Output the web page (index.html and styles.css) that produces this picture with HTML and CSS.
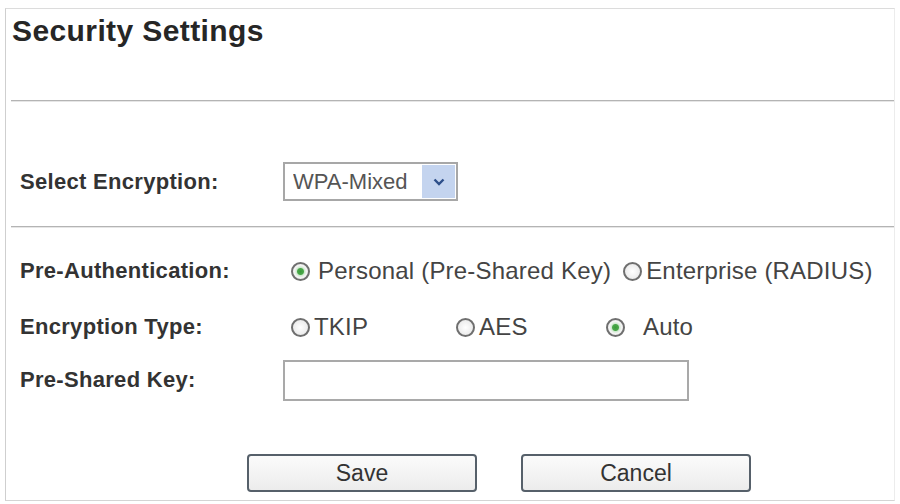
FILE: index.html
```html
<!DOCTYPE html>
<html lang="en">
<head>
<meta charset="UTF-8"/>
<title>Security Settings</title>
<link rel="stylesheet" href="styles.css">
</head>
<body>

<div class="panel">
  <h1 class="title">Security Settings</h1>
  <div class="rule"></div>

  <div class="row row-select">
    <span class="label">Select Encryption:</span>
    <div class="select-wrap">
      <select class="select">
        <option>WPA-Mixed</option>
        <option>WPA</option>
        <option>WPA2</option>
        <option>WEP</option>
        <option>None</option>
      </select>
      <span class="select-arrow">
        <svg width="12" height="8" viewBox="0 0 12 8"><path d="M1.5 1.5 L6 6 L10.5 1.5" fill="none" stroke="#2d4f8a" stroke-width="2.4"/></svg>
      </span>
    </div>
  </div>

  <div class="rule rule-2"></div>

  <div class="row row-radio">
    <span class="label">Pre-Authentication:</span>
    <div class="options">
      <label class="opt opt-personal"><input type="radio" name="auth" checked><span>Personal (Pre-Shared Key)</span></label>
      <label class="opt opt-enterprise"><input type="radio" name="auth"><span>Enterprise (RADIUS)</span></label>
    </div>
  </div>

  <div class="row row-radio">
    <span class="label">Encryption Type:</span>
    <div class="options">
      <label class="opt cell-tkip"><input type="radio" name="enc"><span>TKIP</span></label>
      <label class="opt cell-aes"><input type="radio" name="enc"><span>AES</span></label>
      <label class="opt cell-auto"><input type="radio" name="enc" checked><span>Auto</span></label>
    </div>
  </div>

  <div class="row row-key">
    <span class="label">Pre-Shared Key:</span>
    <input type="text" class="key-input">
  </div>

  <div class="buttons">
    <button type="button" class="btn">Save</button>
    <button type="button" class="btn">Cancel</button>
  </div>
</div>

</body>
</html>
```

FILE: styles.css
```css
*{box-sizing:border-box;margin:0;padding:0;}
body{font-family:"Liberation Sans",Arial,sans-serif;background:#fff;color:#2a2a2a;width:900px;height:504px;overflow:hidden;}
.panel{margin:8px 5px 0 5px;height:493px;border-top:1px solid #dcdcdc;border-left:1px solid #cfcfcf;border-right:1px solid #ececec;border-bottom:1px solid #d4d4d4;}
.title{font-size:30px;font-weight:bold;line-height:34px;letter-spacing:0.4px;color:#262626;padding:5px 0 0 6px;}
.rule{height:2px;background:#b4b4b4;border-bottom:1px solid #e6e6e6;margin:52px 0 0 5px;}
.rule-2{margin-top:25px;}
.row{display:grid;grid-template-columns:263px 1fr;align-items:center;padding-left:14px;}
.label{font-size:22px;font-weight:bold;letter-spacing:0.3px;color:#333;}
.row-select{margin-top:60px;height:39px;}
.select-wrap{position:relative;width:175px;height:39px;}
.select{appearance:none;-webkit-appearance:none;width:100%;height:100%;border:2px solid #a7a7a7;background:#fff;font-family:inherit;font-size:22px;color:#555;padding:0 0 0 8px;outline:none;}
.select-arrow{position:absolute;right:3px;top:3px;width:33px;height:33px;background:#c4d4ef;display:flex;align-items:center;justify-content:center;pointer-events:none;}
.row-radio{height:56px;}
.rule-2 + .row{margin-top:15px;}
.options{display:flex;align-items:center;}
.opt{display:inline-flex;align-items:center;font-size:24px;letter-spacing:0.2px;color:#444;}
.opt input{appearance:none;-webkit-appearance:none;width:19px;height:19px;min-width:19px;border-radius:50%;border:2px solid #6f6f6f;background:radial-gradient(circle,#fff 0,#e4e4e4 100%);margin:0 4px 0 8px;flex:none;}
.opt input:checked{background:radial-gradient(circle,#3a9a3a 0,#4aa84a 3px,#cfe9cf 4px,#f4f4f4 6px,#e2e2e2 100%);}
.opt-personal input{margin-right:8px;}
.opt-enterprise input{margin-left:12px;margin-right:4px;}
.cell-tkip{width:165px;}
.cell-aes{width:150px;}
.cell-aes input{margin-right:4px;}
.cell-auto input{margin-right:18px;}
.row-key{height:50px;}
.key-input{width:406px;height:41px;border:2px solid #a9a9a9;background:#fff;font-family:inherit;font-size:20px;padding:0 6px;outline:none;}
.buttons{display:flex;gap:44px;padding-left:241px;margin-top:49px;}
.btn{width:230px;height:38px;border:2px solid #56606a;border-radius:4px;background:linear-gradient(#fbfbfb,#ececec);font-family:inherit;font-size:23px;color:#333;}
```
